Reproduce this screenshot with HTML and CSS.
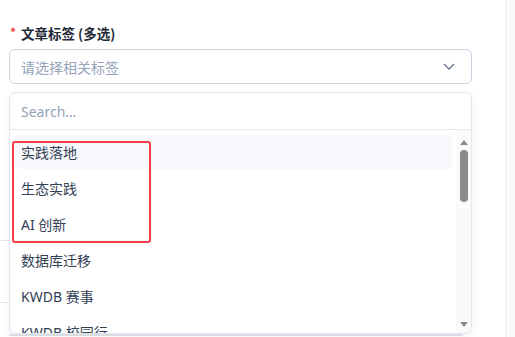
FILE: index.html
```html
<!DOCTYPE html>
<html lang="zh">
<head>
<meta charset="utf-8">
<link rel="stylesheet" href="styles.css">
</head>
<body>
<div class="page">
  <main class="main">
    <div class="field">
      <label class="label"><span class="req">*</span>文章标签 (多选)</label>
      <div class="select">
        <span class="placeholder">请选择相关标签</span>
        <svg class="chev" width="12" height="8" viewBox="0 0 12 8"><path d="M1.5 1.5 L6 6 L10.5 1.5" fill="none" stroke="#64748b" stroke-width="1.4" stroke-linecap="round" stroke-linejoin="round"/></svg>
      </div>
    </div>
    <div class="behind">
      <div class="rule r1"></div>
      <div class="rule r2"></div>
    </div>
    <div class="dropdown">
      <div class="search">Search…</div>
      <div class="listwrap">
        <ul class="list">
          <li class="opt active">实践落地</li>
          <li class="opt">生态实践</li>
          <li class="opt">AI 创新</li>
          <li class="opt">数据库迁移</li>
          <li class="opt">KWDB 赛事</li>
          <li class="opt">KWDB 校园行</li>
        </ul>
        <div class="scrollbar">
          <span class="arrow up"></span>
          <span class="thumb"></span>
          <span class="spacer"></span>
          <span class="arrow down"></span>
        </div>
      </div>
    </div>
    <div class="bottomline"></div>
    <div class="highlight-box"></div>
  </main>
  <aside class="side"></aside>
</div>
</body>
</html>
```
FILE: styles.css
```css
* { box-sizing: border-box; }
html, body { margin: 0; padding: 0; background: #ffffff; }
body {
  width: 515px; height: 337px; overflow: hidden;
  font-family: "Noto Sans", "Noto Sans CJK SC", sans-serif;
}
.page { display: flex; height: 337px; }
.main { position: relative; width: 505px; padding: 23px 0 0 9px; }
.side { flex: 1; background: #f8f9fb; border-left: 1px solid #eef0f4; }

.field { display: flex; flex-direction: column; gap: 6px; width: 463px; }
.label {
  font-family: "Noto Sans CJK SC", sans-serif;
  font-size: 13.5px; font-weight: 700; line-height: 20px; color: #1f2937;
  display: flex; align-items: center;
}
.req { color: #ef4444; font-size: 12px; width: 11px; margin-left: 1px; margin-top: -3px; }
.select {
  height: 35px; border: 1px solid #cbd5e1; border-radius: 6px;
  display: flex; align-items: center; justify-content: space-between;
  padding: 0 16px 0 11px;
}
.placeholder { font-family: "Noto Sans CJK SC", sans-serif; font-size: 14px; color: #94a3b8; }
.chev { display: block; }

.behind { position: absolute; left: 0; top: 0; }
.rule { position: absolute; left: 0; width: 9px; height: 1px; background: #e5e7eb; }
.r1 { top: 240px; }
.r2 { top: 302px; }

.dropdown {
  position: absolute; left: 9px; top: 92px; width: 463px; height: 242px;
  background: #fff; border: 1px solid #e2e8f0; border-radius: 7px;
  box-shadow: 0 2px 8px rgba(15, 23, 42, 0.06);
  display: flex; flex-direction: column; overflow: hidden;
}
.search {
  height: 37px; flex: none; border-bottom: 1px solid #e2e8f0;
  padding-left: 11px; display: flex; align-items: center;
  font-size: 14px; color: #94a3b8;
}
.listwrap { flex: 1; display: flex; min-height: 0; }
.list {
  list-style: none; margin: 0; padding: 5px 4px 0 5px; flex: 1;
  display: flex; flex-direction: column; gap: 2px;
}
.opt {
  height: 34px; flex: none; border-radius: 5px; padding-left: 6px;
  display: flex; align-items: center;
  font-family: "Noto Sans", "Noto Sans CJK SC", sans-serif;
  font-size: 14px; color: #334155;
}
.opt.active { background: #f7f8fb; }
.scrollbar {
  width: 15px; flex: none; background: #fafafa;
  display: flex; flex-direction: column; align-items: center;
  padding: 10px 0 6px 0;
}
.arrow { width: 0; height: 0; border-left: 4px solid transparent; border-right: 4px solid transparent; }
.arrow.up { border-bottom: 5px solid #8a8a8a; }
.arrow.down { border-top: 5px solid #8a8a8a; }
.thumb { width: 8px; height: 52px; background: #8c8c8c; border-radius: 4px; margin-top: 5px; }
.spacer { flex: 1; }

.bottomline { position: absolute; left: 9px; top: 334px; width: 454px; height: 2px; background: #d9dce1; }
.highlight-box {
  position: absolute; left: 12px; top: 141px; width: 139px; height: 102px;
  border: 2px solid #f43f46; border-radius: 3px;
}
```
